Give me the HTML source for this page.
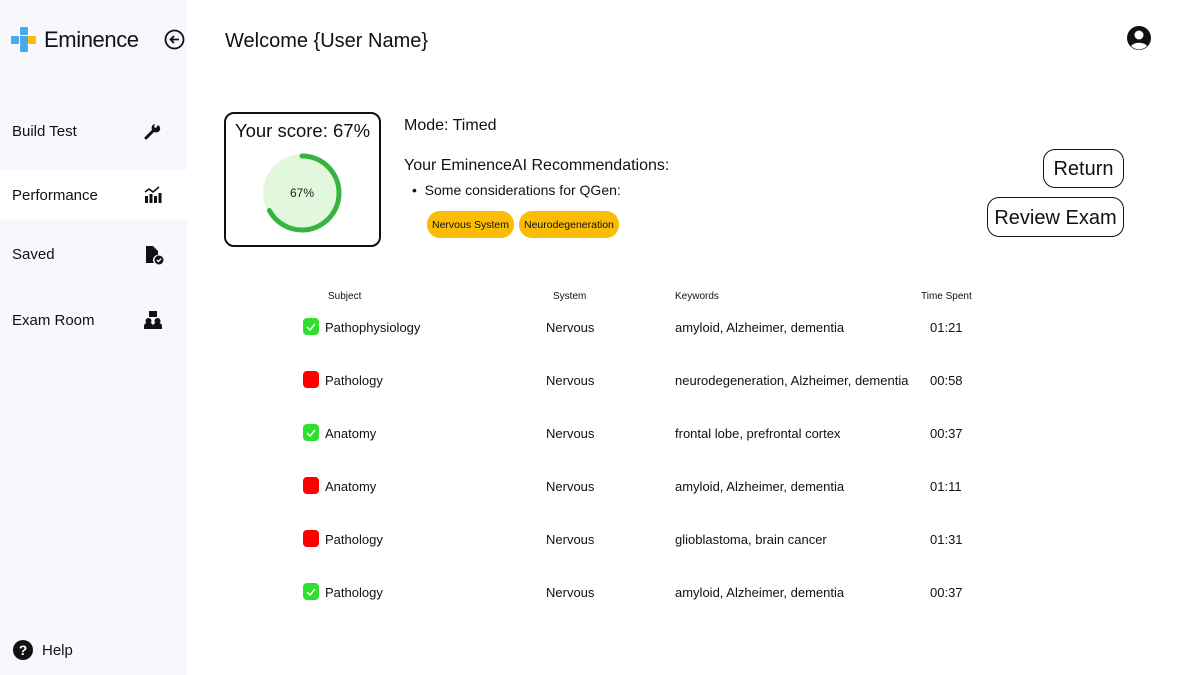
<!DOCTYPE html>
<html><head><style>
*{margin:0;padding:0;box-sizing:border-box}
body{width:1200px;height:675px;background:#fff;font-family:"Liberation Sans",sans-serif;color:#111;position:relative;overflow:hidden}
.side{position:absolute;left:0;top:0;width:187px;height:675px;background:#f7f8fd}
.abs{position:absolute}
.nav{position:absolute;left:0;width:187px;height:50px;font-size:15px;padding-left:12px;line-height:52px}
.nav svg{position:absolute;left:144px;top:16px}
.tag{position:absolute;top:211px;height:27px;background:#fbbc05;border-radius:13px;font-size:10.5px;line-height:28px;padding:0 5px}
.btn{position:absolute;border:1px solid #111;border-radius:12px;font-size:20px;text-align:center}
.th{position:absolute;top:291px;font-size:10px}
.row{position:absolute;font-size:13px;height:20px;line-height:22px}
.bx{position:absolute;left:303px;width:16px;height:17px;border-radius:4px}
</style></head><body>
<div class="side">
  <svg class="abs" style="left:11px;top:27px" width="26" height="26" viewBox="0 0 26 26">
    <rect x="9" y="0" width="8" height="8" rx="1.5" fill="#4aa8e8"/>
    <rect x="0" y="9" width="8" height="8" rx="1.5" fill="#4aa8e8"/>
    <rect x="9" y="9" width="8" height="8" fill="#4aa8e8"/>
    <rect x="17" y="9" width="8" height="8" rx="1.5" fill="#fbbc05"/>
    <rect x="9" y="17" width="8" height="8" rx="1.5" fill="#4aa8e8"/>
  </svg>
  <div class="abs" style="left:44px;top:27px;font-size:22px;letter-spacing:-0.4px">Eminence</div>
  <svg class="abs" style="left:164px;top:29px" width="21" height="21" viewBox="0 0 21 21"><circle cx="10.5" cy="10.5" r="9" fill="none" stroke="#111" stroke-width="1.8"/><path d="M15 10.5H6.5M10 7l-3.5 3.5L10 14" fill="none" stroke="#111" stroke-width="1.8"/></svg>
  <div class="nav" style="top:106px">Build Test<svg width="18" height="18" viewBox="0 0 18 18"><path d="M2 16l7-7" stroke="#111" stroke-width="3" stroke-linecap="round"/><path d="M9 9a4 4 0 1 0 5-6l-2 3-2-1 1-3a4 4 0 0 0-2 7z" fill="#111"/></svg></div>
  <div class="nav" style="top:170px;background:#fff">Performance<svg width="18" height="18" viewBox="0 0 18 18"><path d="M1 6l4-3 4 3 6-5" fill="none" stroke="#111" stroke-width="1.6"/><rect x="1" y="10" width="3" height="7" fill="#111"/><rect x="5.5" y="8" width="3" height="9" fill="#111"/><rect x="10" y="10" width="3" height="7" fill="#111"/><rect x="14.5" y="7" width="3" height="10" fill="#111"/></svg></div>
  <div class="nav" style="top:229px">Saved<svg width="20" height="20" viewBox="0 0 20 20"><path d="M2 1h7l5 5v4a5 5 0 0 0-4 8H2z" fill="#111"/><circle cx="15" cy="15" r="4.5" fill="#111"/><path d="M12.8 15l1.6 1.6 2.8-3" fill="none" stroke="#fff" stroke-width="1.3"/></svg></div>
  <div class="nav" style="top:295px">Exam Room<svg width="18" height="18" viewBox="0 0 18 18"><rect x="5" y="0" width="8" height="6" fill="#111"/><circle cx="4.5" cy="10" r="3" fill="#111"/><circle cx="13.5" cy="10" r="3" fill="#111"/><path d="M0 18v-3a3 3 0 0 1 3-3h3a3 3 0 0 1 3 3v3zM9 18v-3a3 3 0 0 1 3-3h3a3 3 0 0 1 3 3v3z" fill="#111"/></svg></div>
  <svg class="abs" style="left:13px;top:640px" width="20" height="20" viewBox="0 0 20 20"><circle cx="10" cy="10" r="10" fill="#111"/><text x="10" y="15" text-anchor="middle" fill="#fff" font-size="14" font-weight="bold" font-family="Liberation Sans">?</text></svg>
  <div class="abs" style="left:42px;top:642px;font-size:15px">Help</div>
</div>

<div class="abs" style="left:225px;top:30px;font-size:20px">Welcome {User Name}</div>
<svg class="abs" style="left:1126px;top:25px" width="26" height="26" viewBox="0 0 26 26"><circle cx="13" cy="13" r="12" fill="#111"/><circle cx="13" cy="10" r="4.5" fill="#fff"/><path d="M5 21a9 6 0 0 1 16 0a11 11 0 0 1-16 0z" fill="#fff"/></svg>

<div class="abs" style="left:224px;top:112px;width:157px;height:135px;border:2px solid #111;border-radius:10px"></div>
<div class="abs" style="left:224px;top:120px;width:157px;text-align:center;font-size:18.5px">Your score: 67%</div>
<svg class="abs" style="left:260px;top:151px" width="84" height="84" viewBox="0 0 84 84">
  <circle cx="42" cy="42" r="39" fill="#e1f8dc"/>
  <circle cx="42" cy="42" r="37" fill="none" stroke="#36b441" stroke-width="5" stroke-linecap="round" stroke-dasharray="155.8 300" transform="rotate(-90 42 42)"/>
  <text x="42" y="46" text-anchor="middle" font-size="12" font-family="Liberation Sans" fill="#222">67%</text>
</svg>

<div class="abs" style="left:404px;top:117px;font-size:16px">Mode: Timed</div>
<div class="abs" style="left:404px;top:157px;font-size:16px">Your EminenceAI Recommendations:</div>
<div class="abs" style="left:412px;top:182px;font-size:14px">•&nbsp;&nbsp;Some considerations for QGen:</div>
<div class="tag" style="left:427px">Nervous System</div>
<div class="tag" style="left:519px">Neurodegeneration</div>

<div class="btn" style="left:1043px;top:149px;width:81px;height:39px;line-height:39px">Return</div>
<div class="btn" style="left:987px;top:197px;width:137px;height:40px;line-height:40px">Review Exam</div>

<div class="th" style="left:328px">Subject</div>
<div class="th" style="left:553px">System</div>
<div class="th" style="left:675px">Keywords</div>
<div class="th" style="left:921px">Time Spent</div>

<div class="bx" style="top:318px;background:#2ee02e"><svg width="16" height="17"><path d="M4 9l3 3 5-6" fill="none" stroke="#fff" stroke-width="1.5"/></svg></div>
<div class="row" style="top:317px;left:325px">Pathophysiology</div><div class="row" style="top:317px;left:546px">Nervous</div><div class="row" style="top:317px;left:675px">amyloid, Alzheimer, dementia</div><div class="row" style="top:317px;left:930px">01:21</div>

<div class="bx" style="top:371px;background:#f00"></div>
<div class="row" style="top:370px;left:325px">Pathology</div><div class="row" style="top:370px;left:546px">Nervous</div><div class="row" style="top:370px;left:675px">neurodegeneration, Alzheimer, dementia</div><div class="row" style="top:370px;left:930px">00:58</div>

<div class="bx" style="top:424px;background:#2ee02e"><svg width="16" height="17"><path d="M4 9l3 3 5-6" fill="none" stroke="#fff" stroke-width="1.5"/></svg></div>
<div class="row" style="top:423px;left:325px">Anatomy</div><div class="row" style="top:423px;left:546px">Nervous</div><div class="row" style="top:423px;left:675px">frontal lobe, prefrontal cortex</div><div class="row" style="top:423px;left:930px">00:37</div>

<div class="bx" style="top:477px;background:#f00"></div>
<div class="row" style="top:476px;left:325px">Anatomy</div><div class="row" style="top:476px;left:546px">Nervous</div><div class="row" style="top:476px;left:675px">amyloid, Alzheimer, dementia</div><div class="row" style="top:476px;left:930px">01:11</div>

<div class="bx" style="top:530px;background:#f00"></div>
<div class="row" style="top:529px;left:325px">Pathology</div><div class="row" style="top:529px;left:546px">Nervous</div><div class="row" style="top:529px;left:675px">glioblastoma, brain cancer</div><div class="row" style="top:529px;left:930px">01:31</div>

<div class="bx" style="top:583px;background:#2ee02e"><svg width="16" height="17"><path d="M4 9l3 3 5-6" fill="none" stroke="#fff" stroke-width="1.5"/></svg></div>
<div class="row" style="top:582px;left:325px">Pathology</div><div class="row" style="top:582px;left:546px">Nervous</div><div class="row" style="top:582px;left:675px">amyloid, Alzheimer, dementia</div><div class="row" style="top:582px;left:930px">00:37</div>
</body></html>
